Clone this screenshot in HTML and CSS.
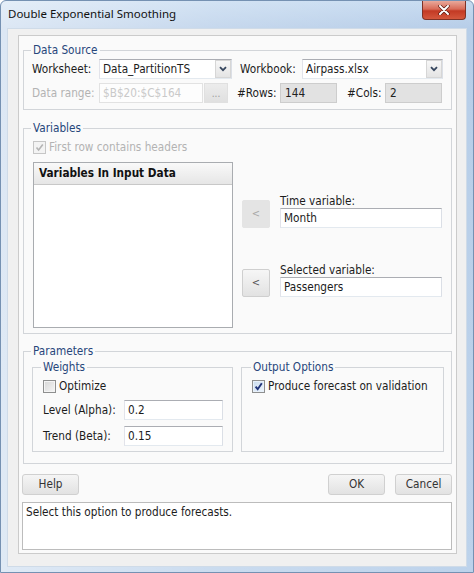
FILE: index.html
```html
<!DOCTYPE html>
<html>
<head>
<meta charset="utf-8">
<title>Double Exponential Smoothing</title>
<link rel="stylesheet" href="styles.css">
</head>
<body>
<div class="window">
  <div class="titlebar">
    <span class="title">Double Exponential Smoothing</span>
    <div class="close">
      <svg width="12" height="10" viewBox="0 0 12 10"><path d="M2 1 L10 9 M10 1 L2 9" stroke="#5a1a12" stroke-width="3.4" stroke-linecap="round"/><path d="M2 1 L10 9 M10 1 L2 9" stroke="#ffffff" stroke-width="2" stroke-linecap="round"/></svg>
    </div>
  </div>
  <div class="client">
    <div class="panel">
      <fieldset class="group ds">
        <legend>Data Source</legend>
        <div class="row">
          <span class="lbl w67">Worksheet:</span>
          <div class="combo w133"><span class="val">Data_PartitionTS</span><span class="drop"><svg width="8" height="6" viewBox="0 0 8 6"><path d="M1 1.2 L4 4.2 L7 1.2" fill="none" stroke="#36465e" stroke-width="1.8"/></svg></span></div>
          <span class="lbl wb">Workbook:</span>
          <div class="combo w141"><span class="val">Airpass.xlsx</span><span class="drop"><svg width="8" height="6" viewBox="0 0 8 6"><path d="M1 1.2 L4 4.2 L7 1.2" fill="none" stroke="#36465e" stroke-width="1.8"/></svg></span></div>
        </div>
        <div class="row r2">
          <span class="lbl dis w67">Data range:</span>
          <div class="field disabled w104">$B$20:$C$164</div>
          <div class="dots">...</div>
          <span class="lbl rows">#Rows:</span>
          <div class="field ro w57">144</div>
          <span class="lbl cols">#Cols:</span>
          <div class="field ro w57">2</div>
        </div>
      </fieldset>

      <fieldset class="group vars">
        <legend>Variables</legend>
        <div class="cbrow dis-row">
          <span class="cb cb-dis"><svg width="9" height="9" viewBox="0 0 9 9"><path d="M1.5 4.5 L3.6 7 L7.8 1.5" fill="none" stroke="#b4b4b4" stroke-width="1.6"/></svg></span>
          <span class="cblbl dis">First row contains headers</span>
        </div>
        <div class="varbody">
          <div class="list">
            <div class="listhead">Variables In Input Data</div>
          </div>
          <div class="selcol">
            <div class="selrow">
              <div class="arrow arrow-dis">&lt;</div>
              <div class="selfield">
                <span class="sellbl">Time variable:</span>
                <div class="field w162">Month</div>
              </div>
            </div>
            <div class="selrow second">
              <div class="arrow">&lt;</div>
              <div class="selfield">
                <span class="sellbl">Selected variable:</span>
                <div class="field w162">Passengers</div>
              </div>
            </div>
          </div>
        </div>
      </fieldset>

      <fieldset class="group params">
        <legend>Parameters</legend>
        <div class="paramsbody">
          <fieldset class="group sub weights">
            <legend>Weights</legend>
            <div class="cbrow">
              <span class="cb"></span>
              <span class="cblbl">Optimize</span>
            </div>
            <div class="prow">
              <span class="plbl">Level (Alpha):</span>
              <div class="field w99">0.2</div>
            </div>
            <div class="prow">
              <span class="plbl">Trend (Beta):</span>
              <div class="field w99">0.15</div>
            </div>
          </fieldset>
          <fieldset class="group sub output">
            <legend>Output Options</legend>
            <div class="cbrow">
              <span class="cb cb-on"><svg width="9" height="9" viewBox="0 0 9 9"><path d="M1.6 4.6 L3.7 7.2 L7.8 1.2" fill="none" stroke="#21347a" stroke-width="1.9"/></svg></span>
              <span class="cblbl out">Produce forecast on validation</span>
            </div>
          </fieldset>
        </div>
      </fieldset>

      <div class="buttons">
        <div class="btn">Help</div>
        <div class="spacer"></div>
        <div class="btn">OK</div>
        <div class="btn cancel">Cancel</div>
      </div>

      <div class="desc">Select this option to produce forecasts.</div>
    </div>
  </div>
</div>
</body>
</html>
```

FILE: styles.css
```css
* { box-sizing: border-box; }
html, body { margin: 0; padding: 0; }
body {
  width: 474px;
  height: 573px;
  overflow: hidden;
  background: #ffffff;
  font-family: "DejaVu Sans Condensed", "DejaVu Sans", sans-serif;
  font-stretch: condensed;
  font-size: 11.7px;
  color: #1c1c1c;
}

.window {
  width: 474px;
  height: 573px;
  border: 1px solid #7591b2;
  border-radius: 6px 6px 0 0;
  background:
    linear-gradient(to right, rgba(255,255,255,0.55) 0, rgba(255,255,255,0.25) 45%, rgba(255,255,255,0.05) 100%),
    linear-gradient(to bottom, #c4d9f0 0, #b3cbe7 27px, #b9d0ea 100%);
  display: flex;
  flex-direction: column;
}

.titlebar {
  height: 27px;
  display: flex;
  justify-content: space-between;
  align-items: flex-start;
  flex: none;
}
.title {
  font-family: "Noto Sans", "Open Sans", sans-serif;
  font-stretch: normal;
  font-size: 11.5px;
  color: #111;
  line-height: 26px;
  padding-left: 7px;
}
.close {
  width: 44px;
  height: 19px;
  margin-right: 7px;
  border: 1px solid #7e3226;
  border-top: none;
  border-radius: 0 0 4px 4px;
  background: linear-gradient(to bottom, #e9a99b 0, #d86b58 45%, #c33a24 55%, #d4573d 100%);
  display: flex;
  align-items: center;
  justify-content: center;
}

.client {
  margin: 0 6px 5px 6px;
  height: 539px;
  flex: none;
  border: 1px solid #cfdbe8;
  background: #f0f0f0;
  padding: 6px 9px 12px 10px;
}

.panel {
  height: 519px;
  border: 1px solid #cbcbcb;
  background: #fafafa;
  padding: 7px 4px 3px 4px;
  display: flex;
  flex-direction: column;
}

.group {
  margin: 0;
  min-width: 0;
  border: 1px solid #d2d5d9;
  padding: 0 7px;
  flex: none;
}
.group > legend {
  padding: 0 2px;
  margin: 0;
  height: 14px;
  line-height: 14px;
  color: #27467a;
  font-size: 11.7px;
}

/* Data source */
.ds { padding: 2px 7px 6px 7px; margin-bottom: 11px; }
.row { display: flex; align-items: center; height: 20px; margin-left: 1px; }
.r2 { margin-top: 4px; }
.lbl { white-space: nowrap; }
.w67 { width: 67px; }
.wb { width: 62px; margin-left: 8px; }
.rows { width: 43px; margin-left: 9px; }
.cols { width: 38px; margin-left: 10px; }
.dis { color: #b3b3b3; }

.combo {
  display: flex;
  height: 20px;
  border: 1px solid;
  border-color: #abadb3 #dbdfe6 #e3e9ef #e2e3ea;
  background: #fff;
}
.combo .val { flex: 1; padding-left: 3px; line-height: 18px; white-space: nowrap; overflow: hidden; }
.combo .drop {
  width: 16px;
  border: 1px solid #d6d6d6;
  background: linear-gradient(to bottom, #f7f7f7, #e4e4e4);
  display: flex;
  align-items: center;
  justify-content: center;
}
.w133 { width: 133px; }
.w141 { width: 141px; }
.w104 { width: 104px; }
.w57 { width: 57px; }
.w162 { width: 162px; }
.w99 { width: 99px; }

.field {
  height: 20px;
  border: 1px solid;
  border-color: #abadb3 #dbdfe6 #e3e9ef #e2e3ea;
  background: #fff;
  padding-left: 3px;
  line-height: 18px;
  white-space: nowrap;
}
.field.disabled { color: #c9c9c9; border-color: #e2e2e2; background: #fdfdfd; }
.field.ro { background: #e2e2e2; border-color: #cdcdcd; padding-left: 4px; color: #222; }

.dots {
  width: 24px;
  height: 20px;
  margin-left: 1px;
  background: linear-gradient(to bottom, #ececec, #e0e0e0);
  border: 1px solid #e0e0e0;
  color: #9a9a9a;
  text-align: center;
  line-height: 20px;
  font-size: 10px;
}

/* Variables */
.vars { padding: 4px 7px 5px 7px; margin-bottom: 10px; }
.cbrow { display: flex; align-items: center; height: 16px; margin-left: 2px; }
.cb {
  width: 13px;
  height: 13px;
  border: 1px solid #8e8f8f;
  background: linear-gradient(135deg, #d6d6d6, #f6f6f6);
  box-shadow: inset 0 0 0 1px #f4f4f4;
  display: flex;
  align-items: center;
  justify-content: center;
  flex: none;
}
.cb-dis { border-color: #c6c6c6; background: #f3f3f3; box-shadow: none; }
.cb-on { background: linear-gradient(135deg, #c9dcf0, #eef5fc); box-shadow: inset 0 0 0 1px #e8f1fa; }
.cblbl { margin-left: 3px; white-space: nowrap; }

.varbody { display: flex; margin-top: 7px; margin-left: 2px; }
.list {
  width: 200px;
  height: 166px;
  border: 1px solid #a9acb0;
  background: #fff;
}
.listhead {
  height: 22px;
  line-height: 21px;
  padding-left: 5px;
  font-weight: bold;
  color: #111;
  background: linear-gradient(to bottom, #f9f9f9, #e6e6e6);
  border-bottom: 1px solid #c8c8c8;
}
.selcol { margin-left: 9px; padding-top: 32px; display: flex; flex-direction: column; }
.selrow { display: flex; align-items: flex-end; }
.selrow.second { margin-top: 35px; }
.arrow {
  width: 28px;
  height: 28px;
  border: 1px solid #cfcfcf;
  border-radius: 2px;
  background: linear-gradient(to bottom, #f6f6f6, #e2e2e2);
  color: #555;
  text-align: center;
  line-height: 26px;
  font-size: 11px;
}
.arrow-dis { background: #e4e4e4; border-color: #e4e4e4; color: #a8a8a8; }
.selfield { margin-left: 10px; display: flex; flex-direction: column; }
.sellbl { height: 14px; line-height: 14px; }

/* Parameters */
.params { padding: 2px 7px 11px 7px; margin-bottom: 10px; }
.paramsbody { display: flex; margin-left: 1px; }
.sub { padding: 4px 7px 5px 8px; }
.weights { width: 201px; }
.output { width: 203px; margin-left: 8px; padding-left: 9px; }
.output .cbrow { margin-left: 1px; }
.prow { display: flex; align-items: center; height: 20px; margin-top: 6px; margin-left: 2px; }
.plbl { width: 81px; white-space: nowrap; }

/* Buttons */
.buttons { display: flex; height: 21px; margin-left: -1px; flex: none; }
.spacer { flex: 1; }
.btn {
  width: 57px;
  height: 21px;
  border: 1px solid #d0d0d0;
  border-radius: 3px;
  background: linear-gradient(to bottom, #f5f5f5, #e2e2e2);
  color: #333;
  text-align: center;
  line-height: 19px;
}
.btn.cancel { margin-left: 10px; }

.desc {
  margin-top: 7px;
  margin-left: -1px;
  height: 48px;
  flex: none;
  border: 1px solid #bcbcbc;
  background: #fff;
  padding: 2px 3px;
  line-height: 15px;
}
```
